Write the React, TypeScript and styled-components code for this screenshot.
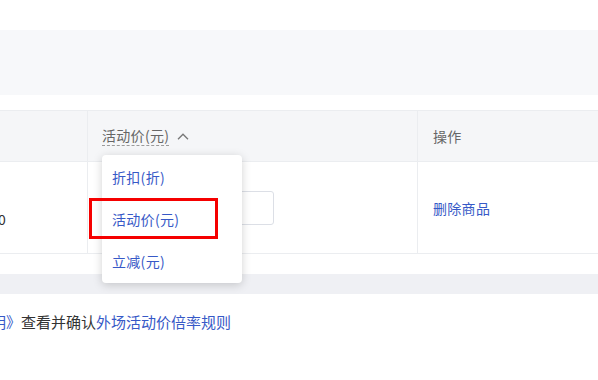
import React from 'react';
import styled, { createGlobalStyle } from 'styled-components';

const GlobalStyle = createGlobalStyle`
  html, body {
    margin: 0;
    padding: 0;
    background: #fff;
    overflow: hidden;
  }
  body {
    font-family: "Noto Sans CJK SC", "Noto Sans", sans-serif;
    color: #333;
  }
  * { box-sizing: border-box; }
`;

const Page = styled.div`
  position: relative;
  width: 598px;
  height: 380px;
  overflow: hidden;
  padding-top: 30px;
`;

const FilterBand = styled.div`
  height: 65px;
  background: #f7f8fa;
`;

const Table = styled.div`
  margin-top: 15px;
  border-top: 1px solid #ebedf0;
`;

const Row = styled.div<{ $head?: boolean }>`
  display: grid;
  grid-template-columns: 87px 330px 1fr;
  height: ${({ $head }) => ($head ? '51px' : '92px')};
  background: ${({ $head }) => ($head ? '#f5f6f8' : '#fff')};
  border-bottom: 1px solid #ebedf0;
`;

const Cell = styled.div<{ $divider?: boolean; $right?: boolean; $pad?: number }>`
  display: flex;
  align-items: center;
  justify-content: ${({ $right }) => ($right ? 'flex-end' : 'flex-start')};
  padding: 0 14px 0 ${({ $pad }) => $pad ?? 14}px;
  border-left: ${({ $divider }) => ($divider ? '1px solid #ebedf0' : 'none')};
  font-size: 14px;
  letter-spacing: 0.3px;
  line-height: 20px;
  overflow: hidden;
  white-space: nowrap;
`;

const HeadText = styled.span`
  color: #666;
`;

const Sortable = styled.span`
  display: inline-flex;
  align-items: center;
  gap: 8px;
  color: #666;
`;

const DashedLabel = styled.span`
  border-bottom: 1px dashed #9a9a9a;
  line-height: 19px;
`;

const Price = styled.span`
  color: #333;
  margin-top: 22px;
  margin-right: -7px;
  padding-right: 74px;
`;

const PriceInput = styled.div`
  width: 172px;
  height: 34px;
  border: 1px solid #dcdfe6;
  border-radius: 3px;
  background: #fff;
`;

const LinkText = styled.span`
  color: #3759c7;
  cursor: pointer;
`;

const ScrollTrack = styled.div`
  margin-top: 20px;
  height: 20px;
  background: #eff0f4;
`;

const Note = styled.div`
  margin-top: 18px;
  margin-left: -114px;
  font-size: 15px;
  line-height: 20px;
  white-space: nowrap;
  color: #333;
`;

const Menu = styled.div`
  position: absolute;
  left: 102px;
  top: 155px;
  width: 140px;
  padding: 1px 0;
  background: #fff;
  border-radius: 4px;
  box-shadow: 0 2px 10px rgba(0, 0, 0, 0.18);
`;

const MenuItem = styled.div`
  height: 42px;
  display: flex;
  align-items: center;
  padding-left: 10px;
  font-size: 14px;
  letter-spacing: 0.3px;
  color: #3759c7;
`;

const Highlight = styled.div`
  position: absolute;
  left: 89px;
  top: 198px;
  width: 129px;
  height: 41px;
  border: 3px solid #f50000;
`;

const ChevronUp = () => (
  <svg width="12" height="7" viewBox="0 0 12 7" fill="none">
    <path d="M1 6.2 L6 1.2 L11 6.2" stroke="#777" strokeWidth="1.3" />
  </svg>
);

export default function App() {
  return (
    <Page>
      <GlobalStyle />
      <FilterBand />
      <Table>
        <Row $head>
          <Cell />
          <Cell $divider>
            <Sortable>
              <DashedLabel>活动价(元)</DashedLabel>
              <ChevronUp />
            </Sortable>
          </Cell>
          <Cell $divider $pad={15}>
            <HeadText>操作</HeadText>
          </Cell>
        </Row>
        <Row>
          <Cell $right>
            <Price>100.00</Price>
          </Cell>
          <Cell $divider>
            <PriceInput />
          </Cell>
          <Cell $divider $pad={15}>
            <LinkText>删除商品</LinkText>
          </Cell>
        </Row>
      </Table>
      <ScrollTrack />
      <Note>
        <LinkText>《活动价倍率说明》</LinkText>
        查看并确认
        <LinkText>外场活动价倍率规则</LinkText>
      </Note>
      <Menu>
        <MenuItem>折扣(折)</MenuItem>
        <MenuItem>活动价(元)</MenuItem>
        <MenuItem>立减(元)</MenuItem>
      </Menu>
      <Highlight />
    </Page>
  );
}
